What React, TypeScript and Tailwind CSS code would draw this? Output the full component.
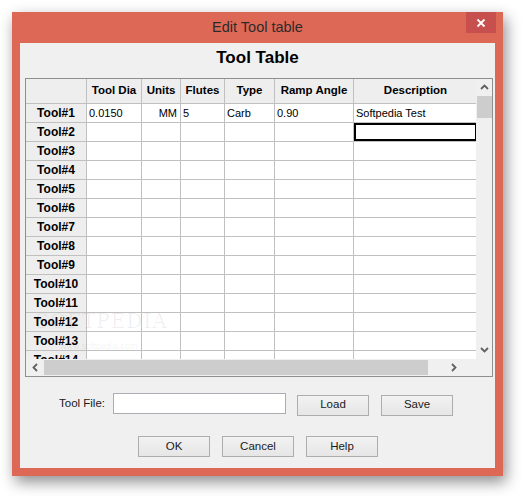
import React from "react";

const columns = [
  { label: "Tool Dia", w: "w-[55px]" },
  { label: "Units", w: "w-[39px]" },
  { label: "Flutes", w: "w-[44px]" },
  { label: "Type", w: "w-[50px]" },
  { label: "Ramp Angle", w: "w-[79px]" },
  { label: "Description", w: "w-[124px]" },
  { label: "", w: "w-[60px]" },
];

const firstRow = ["0.0150", "MM", "5", "Carb", "0.90", "Softpedia Test", ""];

function Chevron({ dir }: { dir: "up" | "down" | "left" | "right" }) {
  const pts = {
    up: "1,6 4.5,2.5 8,6",
    down: "1,3 4.5,6.5 8,3",
    left: "6,1 2.5,4.5 6,8",
    right: "3,1 6.5,4.5 3,8",
  }[dir];
  return (
    <svg width="9" height="9" viewBox="0 0 9 9">
      <polyline points={pts} fill="none" stroke="#606060" strokeWidth="1.8" />
    </svg>
  );
}

function WinButton({ label }: { label: string }) {
  return (
    <button className="w-[72px] h-[21px] border border-[#adadad] bg-gradient-to-b from-[#f2f2f2] to-[#e6e6e6] text-[11.5px] text-[#1a1a1a] leading-none">
      {label}
    </button>
  );
}

export default function App() {
  const rows = Array.from({ length: 14 }, (_, i) => `Tool#${i + 1}`);

  return (
    <div className="w-[528px] h-[496px] bg-white overflow-hidden font-['Liberation_Sans',Arial,sans-serif] pt-[12px] pl-[12px]">
      <div className="w-[491px] h-[464px] bg-[#de6856] flex flex-col shadow-[3px_6px_14px_rgba(0,0,0,0.45)]">
        {/* title bar */}
        <div className="h-[31px] relative flex items-center justify-center">
          <span className="text-[14.5px] text-[#2b2b2b] mt-[1px]">Edit Tool table</span>
          <div className="absolute right-[7px] top-0 w-[30px] h-[21px] bg-[#c7504f] flex items-center justify-center">
            <svg width="10" height="10" viewBox="0 0 10 10">
              <path d="M1.5 1.5 L8.5 8.5 M8.5 1.5 L1.5 8.5" stroke="white" strokeWidth="1.8" />
            </svg>
          </div>
        </div>

        {/* client area */}
        <div className="mx-[8px] mb-[8px] flex-1 bg-[#f0f0f0] flex flex-col">
          <div className="h-[35px] pt-[4px] flex justify-center">
            <span className="text-[17px] font-bold text-black leading-[22px]">Tool Table</span>
          </div>

          <div className="ml-[5px] w-[468px] h-[299px] border border-[#8f8f8f] flex flex-col bg-[#f0f0f0]">
            <div className="flex h-[280px]">
              {/* viewport */}
              <div className="relative w-[450px] h-[280px] overflow-hidden bg-white">
                <div className="flex flex-col w-max">
                  <div className="flex h-[25px] bg-[#eeeeee]">
                    <div className="w-[61px] h-full border-r border-b border-[#c0c0c0]" />
                    {columns.map((c, ci) => (
                      <div
                        key={ci}
                        className={`${c.w} h-full border-r border-b border-[#c0c0c0] flex items-center justify-center text-[11.5px] font-bold text-black`}
                      >
                        {c.label}
                      </div>
                    ))}
                  </div>
                  {rows.map((r, ri) => (
                    <div key={r} className="flex h-[19px]">
                      <div className="w-[61px] h-full bg-[#eeeeee] border-r border-b border-[#c0c0c0] flex items-center justify-center text-[12px] font-bold text-black">
                        {r}
                      </div>
                      {columns.map((c, ci) => {
                        const selected = ri === 1 && ci === 5;
                        return (
                          <div
                            key={ci}
                            className={`${c.w} h-full border-r border-b border-[#c0c0c0] flex items-center px-[2px] text-[11px] text-black ${
                              ci === 1 ? "justify-end pr-[3px]" : ""
                            } ${selected ? "shadow-[inset_0_0_0_2px_#000]" : ""}`}
                          >
                            {ri === 0 ? firstRow[ci] : ""}
                          </div>
                        );
                      })}
                    </div>
                  ))}
                </div>
                <div className="absolute left-[9px] top-[232px] text-[20px] tracking-[1px] leading-none text-black/[0.06] font-['DejaVu_Serif',serif] select-none">
                  SOFTPEDIA<span className="text-[8px] align-top">™</span>
                </div>
                <div className="absolute left-[34px] top-[263px] text-[9px] leading-none text-black/[0.08] select-none">
                  www.softpedia.com
                </div>
              </div>
              {/* vertical scrollbar */}
              <div className="w-[16px] h-[280px] flex flex-col items-center">
                <div className="h-[17px] flex items-center justify-center">
                  <Chevron dir="up" />
                </div>
                <div className="w-[15px] h-[22px] bg-[#cdcdcd] ml-[1px]" />
                <div className="flex-1" />
                <div className="h-[17px] flex items-center justify-center mb-[1px]">
                  <Chevron dir="down" />
                </div>
              </div>
            </div>
            {/* horizontal scrollbar */}
            <div className="flex h-[17px]">
              <div className="w-[450px] h-full flex items-center">
                <div className="w-[18px] flex justify-center">
                  <Chevron dir="left" />
                </div>
                <div className="w-[384px] h-[15px] bg-[#cdcdcd]" />
                <div className="flex-1 flex justify-center pl-[2px]">
                  <Chevron dir="right" />
                </div>
              </div>
              <div className="w-[16px] h-full" />
            </div>
          </div>

          {/* tool file row */}
          <div className="mt-[16px] h-[21px] flex items-center pl-[39px]">
            <span className="text-[11.5px] text-[#1a1a1a] w-[54px]">Tool File:</span>
            <div className="w-[173px] h-[21px] bg-white border border-[#abadb3]" />
            <div className="ml-[11px]">
              <WinButton label="Load" />
            </div>
            <div className="ml-[12px]">
              <WinButton label="Save" />
            </div>
          </div>

          {/* dialog buttons */}
          <div className="mt-[22px] flex justify-center gap-[12px] pl-[1px]">
            <WinButton label="OK" />
            <WinButton label="Cancel" />
            <WinButton label="Help" />
          </div>
        </div>
      </div>
    </div>
  );
}
